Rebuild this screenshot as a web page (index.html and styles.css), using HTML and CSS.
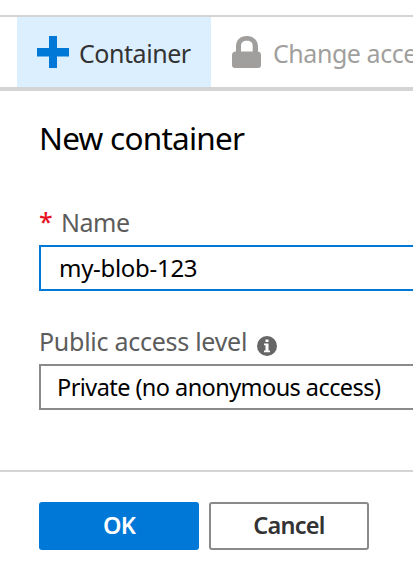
FILE: index.html
```html
<!DOCTYPE html>
<html lang="en">
<head>
<meta charset="utf-8">
<title>New container</title>
<link rel="stylesheet" href="styles.css">
</head>
<body>
<nav class="toolbar">
  <div class="tool tool-active">
    <svg class="plus" width="32" height="32" viewBox="0 0 32 32"><path fill="#0078d7" d="M12 0h8v12h12v8.500H20V32h-8V20.500H0V12h12z"/></svg>
    <span class="tool-text">Container</span>
  </div>
  <div class="tool tool-disabled">
    <svg class="lock" width="29" height="32" viewBox="0 0 29 32"><path fill="#a19f9d" fill-rule="evenodd" d="M4 15.500V10.500C4 4 8.500 0 14.800 0S26 4 26 10.500v5c2 .3 3 1.500 3 3.500v10c0 2-1 3-3 3H3c-2 0-3-1-3-3V19c0-2 1.500-3.500 4-3.500zm5 0h11.700V10c0-3.500-2.200-5.200-5.800-5.200S9 6.500 9 10z"/></svg>
    <span class="tool-text">Change access level</span>
  </div>
</nav>
<main class="panel">
  <h1 class="title">New container</h1>
  <label class="label name-label" for="name"><span class="required">*</span><span class="name-text">Name</span></label>
  <input class="field input" id="name" type="text" value="my-blob-123">
  <div class="label access-label"><span class="access-text">Public access level</span>
    <svg class="info" width="20" height="20" viewBox="0 0 20 20"><circle cx="10" cy="10" r="10" fill="#666"/><path fill="#fff" d="M8.500 3.500h3v2.500h-3zM7 7.500h4.500v7H13v1.800H7v-1.800h1.500V9.300H7z"/></svg>
  </div>
  <div class="field select">Private (no anonymous access)</div>
</main>
<footer class="actions">
  <button class="btn primary">OK</button>
  <button class="btn secondary">Cancel</button>
</footer>
</body>
</html>
```
FILE: styles.css
```css
* { box-sizing: border-box; }
body {
  margin: 0;
  height: 571px;
  overflow: hidden;
  background: #fff;
  font-family: "Noto Sans", "Open Sans", sans-serif;
  font-size: 25px;
}
.toolbar {
  display: flex;
  height: 76px;
  margin-top: 15px;
  padding-left: 17px;
  border-top: 2px solid #d4d4d4;
  border-bottom: 4px solid #d4d4d4;
  overflow: hidden;
}
.tool { display: flex; flex: none; height: 70px; white-space: nowrap; }
.tool-active { width: 194px; padding-left: 20px; background: #dcefff; color: #333; }
.tool-disabled { padding-left: 21px; color: #a19f9d; }
.plus, .lock { flex: none; margin-top: 19px; }
.tool-text { line-height: 72px; letter-spacing: -0.45px; }
.plus + .tool-text { margin-left: 10px; }
.lock + .tool-text { margin-left: 12px; }
.panel { padding-left: 39px; height: 379px; }
.title {
  margin: 0;
  padding-top: 27px;
  height: 112px;
  font-size: 31.5px;
  font-weight: 400;
  line-height: 40px;
  letter-spacing: -0.75px;
  color: #000;
}
.label { display: flex; height: 42px; line-height: 38px; color: #5c5c5c; white-space: nowrap; }
.required { width: 22px; color: #e81123; font-weight: 500; line-height: 36px; }
.name-text { letter-spacing: -0.5px; }
.field {
  display: block;
  width: 100%;
  height: 46px;
  margin: 0;
  border: 2px solid #8a8a8a;
  border-right: 0;
  background: #fff;
  color: #000;
  font: 24px/42px "Noto Sans", "Open Sans", sans-serif;
  white-space: nowrap;
}
.input { padding: 0 0 2px 18px; border-color: #0078d7; border-radius: 0; outline: 0; letter-spacing: -0.3px; }
.access-label { height: 43px; margin-top: 30px; line-height: 40px; }
.access-text { letter-spacing: -0.27px; }
.info { margin: 15px 0 0 10px; }
.select { padding-left: 16px; font-size: 23.5px; letter-spacing: -0.57px; }
.actions { display: flex; gap: 10px; height: 101px; padding: 30px 0 0 39px; border-top: 2px solid #d4d4d4; }
.btn {
  width: 160px;
  height: 48px;
  padding: 0 0 2px;
  border-radius: 3px;
  font: 600 23.5px/42px "Noto Sans", "Open Sans", sans-serif;
  letter-spacing: -0.75px;
}
.primary { border: 2px solid #0078d7; background: #0078d7; color: #fff; }
.secondary { border: 2px solid #8a8a8a; background: #fff; color: #333; }
```
